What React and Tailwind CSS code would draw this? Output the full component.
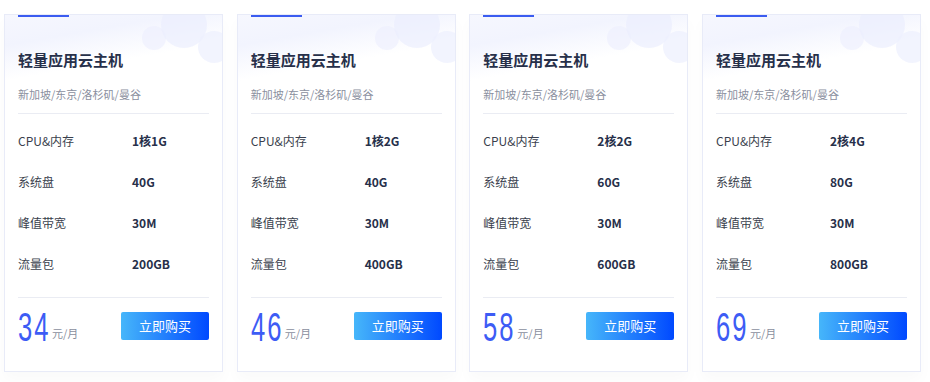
const plans = [
    { cpu: '1核1G', disk: '40G', bw: '30M', traffic: '200GB', price: '34' },
    { cpu: '1核2G', disk: '40G', bw: '30M', traffic: '400GB', price: '46' },
    { cpu: '2核2G', disk: '60G', bw: '30M', traffic: '600GB', price: '58' },
    { cpu: '2核4G', disk: '80G', bw: '30M', traffic: '800GB', price: '69' },
];

function Clouds() {
    return (
        <svg className="absolute top-0 right-0 pointer-events-none" width="90" height="60" viewBox="0 0 90 60">
            <circle cx="22" cy="23" r="12" fill="#eef0fd" opacity="0.7" />
            <circle cx="52" cy="10" r="23" fill="#ebeefd" opacity="0.7" />
            <circle cx="82" cy="32" r="16" fill="#edf0fd" opacity="0.7" />
        </svg>
    );
}

function PlanCard({ plan }) {
    const rows = [
        ['CPU&内存', plan.cpu],
        ['系统盘', plan.disk],
        ['峰值带宽', plan.bw],
        ['流量包', plan.traffic],
    ];

    return (
        <div className="relative overflow-hidden bg-[linear-gradient(170deg,#f6f7fe_0px,#f2f4fe_30px,#ffffff_65px)] border border-[#e8ebf8] shadow-[0_8px_14px_rgba(0,0,0,0.025)] px-[13px] pb-[31px]">
            <Clouds />
            <div className="relative">
                <div className="-mt-px w-[51px] h-[3px] bg-[#3b5cf0]" />
                {/* title */}
                <div className="mt-[33px] text-[15px] leading-[20px] font-bold text-[#27304a]">轻量应用云主机</div>
                <div className="mt-[16px] text-[11px] leading-[16px] text-[#8a8f9e]">新加坡/东京/洛杉矶/曼谷</div>
                <div className="mt-[11px] h-px bg-[#eaecf3]" />

                <div className="mt-[6px]">
                    {rows.map(([label, value]) => (
                        <div key={label} className="h-[41px] flex items-center text-[12px]">
                            <span className="w-[114px] text-[#3a3f4d]">{label}</span>
                            <span className="font-bold text-[#27304a]">{value}</span>
                        </div>
                    ))}
                </div>

                <div className="mt-[13px] h-px bg-[#eaecf3]" />

                {/* price + buy */}
                <div className="mt-[14px] h-[28px] flex items-end justify-between">
                    <div className="flex items-end">
                        <span className="w-[30px] h-[28px] inline-block whitespace-nowrap">
                            <span className="inline-block origin-bottom-left scale-x-[0.64] text-[40px] leading-[28px] tracking-[3px] text-[#3d5cf5] font-['Liberation_Sans',sans-serif] translate-y-[1px]">
                                {plan.price}
                            </span>
                        </span>
                        <span className="ml-[4px] text-[11px] leading-[14px] text-[#8a8f9e]">元/月</span>
                    </div>
                    <button className="w-[88px] h-[28px] rounded-[2px] bg-[linear-gradient(90deg,#46b6fa,#0049ff)] text-white text-[13px]">
                        立即购买
                    </button>
                </div>
            </div>
        </div>
    );
}

export default function App() {
    return (
        <div className="w-[930px] h-[382px] bg-white overflow-hidden font-['Noto_Sans_CJK_SC','Noto_Sans',sans-serif]">
            <div className="pt-[14px] pl-[4px] w-[921px] grid grid-cols-4 gap-[13.67px]">
                {plans.map((plan) => (
                    <PlanCard key={plan.price} plan={plan} />
                ))}
            </div>
        </div>
    );
}
